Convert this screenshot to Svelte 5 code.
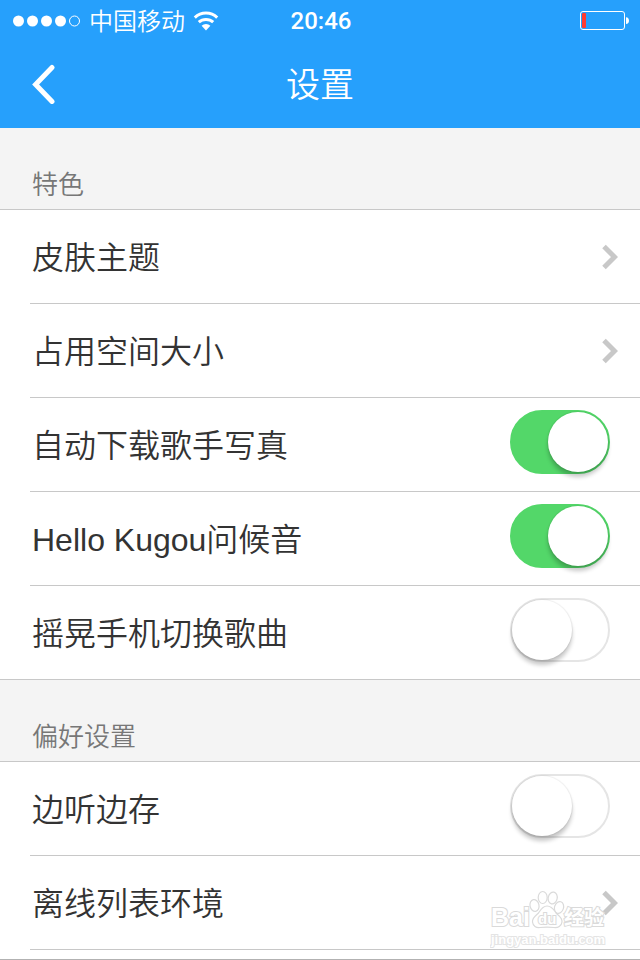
<script lang="ts">
    interface Item {
        label: string
        type: 'link' | 'switch'
        on?: boolean
    }

    interface Section {
        title: string
        items: Item[]
    }

    let sections: Section[] = $state([
        {
            title: '特色',
            items: [
                { label: '皮肤主题', type: 'link' },
                { label: '占用空间大小', type: 'link' },
                { label: '自动下载歌手写真', type: 'switch', on: true },
                { label: 'Hello Kugou问候音', type: 'switch', on: true },
                { label: '摇晃手机切换歌曲', type: 'switch', on: false },
            ],
        },
        {
            title: '偏好设置',
            items: [
                { label: '边听边存', type: 'switch', on: false },
                { label: '离线列表环境', type: 'link' },
            ],
        },
    ])
</script>

<div class="screen">
    <header>
        <div class="status-bar">
            <div class="carrier">
                <svg class="signal" width="68" height="12" viewBox="0 0 68 12" aria-hidden="true">
                    <circle cx="6.5" cy="6" r="5.5" fill="#fff" />
                    <circle cx="20.5" cy="6" r="5.5" fill="#fff" />
                    <circle cx="34.5" cy="6" r="5.5" fill="#fff" />
                    <circle cx="48.5" cy="6" r="5.5" fill="#fff" />
                    <circle cx="62.5" cy="6" r="5" fill="none" stroke="#fff" />
                </svg>
                <span>中国移动</span>
                <svg class="wifi" width="26" height="20" viewBox="0 0 26 20" aria-hidden="true">
                    <g fill="none" stroke="#fff" stroke-width="3">
                        <path d="M1.8 6.6a16.2 16.2 0 0 1 22.4 0" />
                        <path d="M5.8 11.2a10.6 10.6 0 0 1 14.4 0" />
                    </g>
                    <path d="M8.6 14.8a6.4 6.4 0 0 1 8.8 0L13 19.4z" fill="#fff" />
                </svg>
            </div>
            <time>20:46</time>
            <svg class="battery" width="50" height="20" viewBox="0 0 50 20" aria-hidden="true">
                <rect x=".5" y=".5" width="44" height="18" rx="2.5" fill="none" stroke="#fff" />
                <rect x="2" y="2" width="4" height="15" rx="1" fill="#ff3b30" />
                <path d="M46 6.2c4 0 4 6.8 0 6.8z" fill="#fff" />
            </svg>
        </div>
        <div class="nav-bar">
            <button class="back" aria-label="返回">
                <svg width="24" height="40" viewBox="0 0 24 40" aria-hidden="true">
                    <path
                        d="M20 3.5 3.6 20.5 20 37.5"
                        fill="none"
                        stroke="#fff"
                        stroke-width="5"
                        stroke-linecap="round"
                    />
                </svg>
            </button>
            <h1>设置</h1>
        </div>
    </header>

    <main>
        {#each sections as section}
            <section>
                <h2>{section.title}</h2>
                <ul>
                    {#each section.items as item}
                        <li>
                            {#if item.type === 'link'}
                                <a class="row" href="#top">
                                    <span>{item.label}</span>
                                    <svg width="16" height="26" viewBox="0 0 16 26" aria-hidden="true">
                                        <path d="M2 2.5 12.5 13 2 23.5" fill="none" stroke="#c8c8c8" stroke-width="5" />
                                    </svg>
                                </a>
                            {:else}
                                <label class="row">
                                    <span>{item.label}</span>
                                    <input type="checkbox" role="switch" bind:checked={item.on} />
                                </label>
                            {/if}
                        </li>
                    {/each}
                </ul>
            </section>
        {/each}
        <div class="list-end"></div>
    </main>

    <svg class="watermark" width="118" height="60" viewBox="0 0 118 60" aria-hidden="true">
        <g fill="#fff" stroke="#dadada" stroke-width="1.2">
            <ellipse cx="44.5" cy="17.5" rx="4.5" ry="6" transform="rotate(-12 44.5 17.5)" />
            <ellipse cx="52.7" cy="9.5" rx="4.5" ry="6" />
            <ellipse cx="62.7" cy="10" rx="4.5" ry="6" transform="rotate(12 62.7 10)" />
            <ellipse cx="69" cy="19.5" rx="4.5" ry="6" transform="rotate(18 69 19.5)" />
            <path
                d="M57 18c5 0 7 4 9 7 3 3 6.5 5 6 9-.5 4-4 6-8 5.5-5-.5-9-.5-14 0-4 .5-7-1.5-7.5-5.5-.5-4 3-6 6-9 2-3 4-7 8.5-7z"
            />
        </g>
        <g class="mark-text">
            <text x="1" y="38" font-size="25">Bai</text>
            <text x="48" y="36" font-size="15">du</text>
            <text x="74" y="37" font-size="20">经验</text>
        </g>
        <text class="mark-url" x="1" y="56" font-size="13">jingyan.baidu.com</text>
    </svg>
</div>

<style>
    :global(body) {
        margin: 0;
        background: #fff;
    }

    .screen {
        position: relative;
        overflow: hidden;
        font-family: 'Liberation Sans', 'Noto Sans CJK SC DemiLight', 'Noto Sans CJK SC', sans-serif;
        font-weight: 300;
        color: #333;
    }

    header {
        background: #26a0fc;
        color: #fff;
    }

    .status-bar {
        display: grid;
        grid-template-columns: 1fr auto 1fr;
        align-items: center;
        height: 40px;
        padding: 0 10px 0 12px;
        font-size: 24px;
        line-height: 40px;
    }
    .carrier {
        display: flex;
        align-items: center;
    }
    .carrier span {
        margin: 2px 8px 0 9px;
    }
    time {
        font-family: Roboto, 'Liberation Sans', sans-serif;
        font-weight: 500;
    }
    .battery {
        justify-self: end;
    }

    .nav-bar {
        display: grid;
        grid-template-columns: 1fr auto 1fr;
        align-items: center;
        height: 88px;
        padding: 0 32px;
    }
    .back {
        display: flex;
        justify-self: start;
        padding: 0;
        border: 0;
        background: none;
        cursor: pointer;
    }
    h1 {
        margin: 0;
        padding-top: 2px;
        font-size: 34px;
        font-weight: 300;
        line-height: 48px;
    }

    h2 {
        margin: 0;
        padding: 37px 32px 4px;
        border-bottom: 1px solid #c8c8c8;
        background: #f4f4f4;
        font-size: 26px;
        font-weight: 300;
        line-height: 40px;
        color: #777;
    }
    ul {
        margin: 0;
        padding: 0;
        list-style: none;
    }
    li {
        padding-left: 30px;
    }
    .row {
        display: flex;
        align-items: center;
        justify-content: space-between;
        box-sizing: border-box;
        height: 94px;
        padding-right: 22px;
        border-bottom: 1px solid #c8c8c8;
        font-size: 32px;
        line-height: 48px;
        color: inherit;
        text-decoration: none;
        cursor: pointer;
    }
    .row span {
        padding: 2px 0 0 2px;
    }
    /* divider between groups runs edge to edge */
    section:not(:last-of-type) li:last-child {
        padding-left: 0;
    }
    section:not(:last-of-type) li:last-child .row {
        padding-left: 30px;
    }

    input {
        appearance: none;
        box-sizing: border-box;
        width: 100px;
        height: 64px;
        margin: 0 8px 5px 0;
        border: 2px solid #e5e5e5;
        border-radius: 32px;
        background: #fff;
        cursor: pointer;
    }
    input::before {
        content: '';
        display: block;
        width: 60px;
        height: 60px;
        border-radius: 50%;
        background: #fff;
        box-shadow: 0 0 1px 1px rgba(0, 0, 0, 0.06), 0 5px 4px rgba(0, 0, 0, 0.22);
    }
    input:checked {
        border-color: #53d769;
        background: #53d769;
    }
    input:checked::before {
        margin-left: auto;
    }

    .list-end {
        height: 9px;
        border-bottom: 1px solid #b2b2b2;
    }

    .watermark {
        position: absolute;
        right: 32px;
        bottom: 12px;
        pointer-events: none;
    }
    .mark-text,
    .mark-url {
        font-family: 'Liberation Sans', 'Noto Sans CJK SC', sans-serif;
        font-weight: bold;
        fill: #fff;
        stroke: #dadada;
        stroke-width: 2px;
        paint-order: stroke;
    }
    .mark-url {
        stroke: #e4e4e4;
    }
</style>
